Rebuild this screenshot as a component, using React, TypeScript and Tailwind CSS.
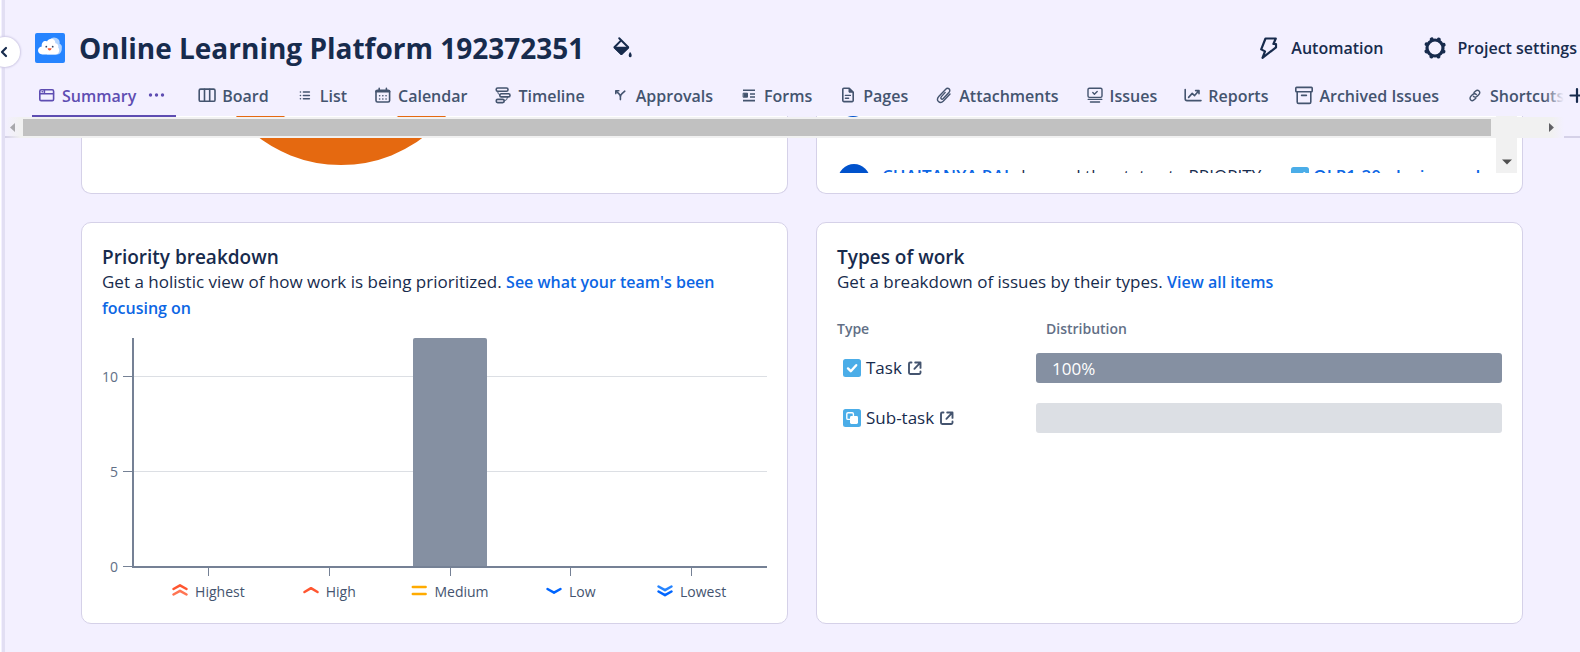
import React from "react";

type Tab = { name: string; icon: React.ReactNode; active?: boolean };

function Glyph({ children }: { children: React.ReactNode }) {
  return (
    <svg
      viewBox="0 0 20 20"
      className="size-5 shrink-0"
      fill="none"
      stroke="currentColor"
      strokeWidth="1.6"
      strokeLinecap="round"
      strokeLinejoin="round"
      aria-hidden="true"
    >
      {children}
    </svg>
  );
}

const tabs: Tab[] = [
  {
    name: "Summary",
    active: true,
    icon: (
      <Glyph>
        <rect x="2.8" y="3.8" width="13.8" height="10.8" rx="1.4" />
        <path d="M3 7.8h13.4M7.4 4v2.4M5.2 5.8h.2" />
      </Glyph>
    ),
  },
  {
    name: "Board",
    icon: (
      <Glyph>
        <rect x="2.2" y="3.1" width="15.8" height="12.2" rx="1.4" />
        <path d="M7.5 3.2v12M12.7 3.2v12" />
      </Glyph>
    ),
  },
  {
    name: "List",
    icon: (
      <Glyph>
        <path d="M8.4 6h6M8.4 9.4h6M8.4 12.8h6M5.4 6h.1M5.4 9.4h.1M5.4 12.8h.1" strokeWidth="1.5" />
      </Glyph>
    ),
  },
  {
    name: "Calendar",
    icon: (
      <Glyph>
        <rect x="3" y="4.2" width="13.6" height="11.8" rx="1.5" />
        <path d="M3.4 5.4h12.8" strokeWidth="2.4" />
        <path d="M6.2 2.4v2M13.4 2.4v2" />
        <path d="M6.6 9.8h.1M9.8 9.8h.1M13 9.8h.1M6.6 13h.1M9.8 13h.1M13 13h.1" />
      </Glyph>
    ),
  },
  {
    name: "Timeline",
    icon: (
      <Glyph>
        <rect x="3.2" y="2" width="11.8" height="3.2" rx="1.5" />
        <rect x="6.8" y="7.7" width="10.2" height="3.2" rx="1.5" />
        <rect x="3.2" y="13.4" width="8" height="3.2" rx="1.5" />
        <path d="M4.6 5.4q0 3 2.2 3.6M14.6 11.2q0 3.2-3.4 3.8" strokeWidth="1" />
      </Glyph>
    ),
  },
  {
    name: "Approvals",
    icon: (
      <Glyph>
        <path d="M9.4 13.6V11Q9.4 9 7.8 7.6L5.6 5.6M9.4 11q0-2 1.6-3.4l2.8-2.4" />
        <path d="M4.8 7.6V4.8h3" />
      </Glyph>
    ),
  },
  {
    name: "Forms",
    icon: (
      <Glyph>
        <path d="M4 4.2h12M11 8h5M11 11h5M4 14.6h12" strokeLinecap="butt" />
        <rect x="4.5" y="7.2" width="4" height="4" fill="currentColor" strokeWidth="1" />
      </Glyph>
    ),
  },
  {
    name: "Pages",
    icon: (
      <Glyph>
        <path d="M5.8 2.2h5.4l4 4v8.4q0 1-1 1H5.8q-1 0-1-1V3.2q0-1 1-1Z" />
        <path d="M11 2.4v3.8h4Z" fill="currentColor" strokeWidth="1" />
        <path d="M7.4 9.4h5M7.4 12.2h3.2" strokeWidth="1.4" />
      </Glyph>
    ),
  },
  {
    name: "Attachments",
    icon: (
      <Glyph>
        <path
          d="M11.2 6.4 7.4 10.6c-1.6 1.8.4 3.4 1.9 1.9l5.6-6c2.6-2.9-.9-5.7-3.4-3.1L5 10.2c-3.9 4.3 1 8.2 4.4 4.8l6.6-7"
          strokeWidth="1.4"
        />
      </Glyph>
    ),
  },
  {
    name: "Issues",
    icon: (
      <Glyph>
        <rect x="3" y="2.2" width="14" height="9.2" rx="1.4" strokeWidth="1.4" />
        <path d="m7.8 6.6 1.6 1.6 2.8-2.8" strokeWidth="1.4" />
        <path d="M3.2 13.4h13.6M5.4 16h9.2" strokeWidth="1.3" />
      </Glyph>
    ),
  },
  {
    name: "Reports",
    icon: (
      <Glyph>
        <path d="M2.2 3.6v9.2q0 1.8 1.8 1.8h14" />
        <path d="m5.6 11.4 3.6-4 2.4 2.2 4-4.6M12.6 4.6h3.4v3.2" />
      </Glyph>
    ),
  },
  {
    name: "Archived Issues",
    icon: (
      <Glyph>
        <rect x="1.8" y="1.4" width="16.4" height="4.4" rx=".8" />
        <path d="M3.2 6v10q0 1.4 1.4 1.4h10.8q1.4 0 1.4-1.4V6M7.6 9.4h4.8" />
      </Glyph>
    ),
  },
  {
    name: "Shortcuts",
    icon: (
      <Glyph>
        <path
          d="m9 6.6 1.4-1.4c2.6-2.6 6 .7 3.5 3.3l-1.7 1.7c-1.4 1.4-3 1-3.8 0M10.8 12.2l-1.4 1.4c-2.6 2.6-6-.7-3.5-3.3l1.7-1.7c1.4-1.4 3-1 3.8 0"
          strokeWidth="1.4"
        />
      </Glyph>
    ),
  },
];

function ProjectLogo() {
  return (
    <svg viewBox="0 0 30 30" className="size-[30px] shrink-0" role="img" aria-label="Project avatar">
      <rect width="30" height="30" rx="2" fill="#2684ff" />
      <path d="M15 6.6a5.4 5.4 0 0 1 9.6 4.2 4 4 0 0 1 2.2 4.4c0 4-2 6.4-5.8 6.4H12Z" fill="#b3d4ff" />
      <path
        d="M7.4 21.4C1.8 21.2 1.6 14 6.8 13.4 6 9 9.8 7 12 8.4c2-3.8 8.4-3.4 8.4 1.8 3 .4 3.2 3 2.8 4.2 2 2 1 7-2.8 7Z"
        fill="#fff"
      />
      <circle cx="11.3" cy="13.7" r=".9" fill="#344563" />
      <circle cx="17.7" cy="13.7" r=".9" fill="#344563" />
      <path d="M12.6 15.2h4q-.4 2.4-2 2.4t-2-2.4Z" fill="#ff5630" />
    </svg>
  );
}

function Header() {
  return (
    <header className="relative z-20 bg-[#f3f0ff] pl-[30px]">
      <div className="flex h-[76px] items-center pt-5">
        <ProjectLogo />
        <h1 className="ml-[14px] text-[28px] leading-10 font-bold whitespace-nowrap text-[#172b4d]">
          Online Learning Platform 192372351
        </h1>
        <button type="button" aria-label="Change background" className="ml-7 text-[#172b4d]">
          <svg viewBox="0 0 24 24" className="size-6" fill="none" stroke="currentColor" strokeWidth="2" strokeLinejoin="round" strokeLinecap="round">
            <path d="m7.2 2.2 9 9-6.8 6.8-7-6.8 6.8-6.8" />
            <path d="M3 11.8h13l-6.600 6.200Z" fill="currentColor" />
            <path d="M18.2 17c-2.600 4.600 2.600 4.600 0 0Z" fill="currentColor" strokeWidth="1.5" />
          </svg>
        </button>
        <div className="ml-auto flex items-center gap-10 pr-[3px] text-[16px] font-semibold text-[#172b4d]">
          <button type="button" className="flex items-center gap-[10px] whitespace-nowrap">
            <svg viewBox="0 0 24 24" className="size-6" fill="none" stroke="currentColor" strokeWidth="2.2" strokeLinejoin="round" strokeLinecap="round" aria-hidden="true">
              <path d="M8.5 2.5H18.8L16.4 8H19V11.4L5.5 21.8 8 15.4 4.2 13.4Z" />
            </svg>
            Automation
          </button>
          <button type="button" className="flex items-center gap-[10px] whitespace-nowrap">
            <svg viewBox="0 0 24 24" className="size-6" fill="none" stroke="currentColor" aria-hidden="true">
              <circle cx="12" cy="12" r="8" strokeWidth="3.2" />
              <circle cx="12" cy="12" r="9.2" strokeWidth="4" strokeLinecap="round" strokeDasharray="0.01 7.216" strokeDashoffset="3.61" />
            </svg>
            Project settings
          </button>
        </div>
      </div>
      <div className="flex h-10 items-center">
        <nav aria-label="Project views" className="relative -ml-[3px] flex h-full min-w-0 flex-1">
          <div className="flex h-10 min-w-0 flex-1 overflow-x-clip">
            {tabs.map((t) => (
              <div
                key={t.name}
                className={
                  t.active
                    ? "relative mr-4 flex shrink-0 items-center pr-[10px] pl-[5px] text-[#5e4db2]"
                    : "mr-4 flex shrink-0 items-center px-[5px] text-[#44546f]"
                }
              >
                <a href="#" className="flex items-center gap-[5px] text-[16px] font-semibold whitespace-nowrap">
                  {t.icon}
                  {t.name}
                </a>
                {t.active && (
                  <>
                    <button type="button" aria-label="More actions" className="ml-[10px]">
                      <svg viewBox="0 0 20 20" className="size-5" fill="currentColor">
                        <circle cx="4.5" cy="9" r="1.7" />
                        <circle cx="10.5" cy="9" r="1.7" />
                        <circle cx="16.5" cy="9" r="1.7" />
                      </svg>
                    </button>
                    <span className="absolute inset-x-0 -bottom-px h-[2px] bg-[#5e4db2]" />
                  </>
                )}
              </div>
            ))}
          </div>
          <span className="absolute inset-y-0 right-0 w-5 bg-linear-to-r from-[#f3f0ff00] to-[#f3f0ff]" />
        </nav>
        <button type="button" aria-label="Add view" className="-mr-2 ml-1 shrink-0 text-[#172b4d]">
          <svg viewBox="0 0 20 20" className="size-5" fill="none" stroke="currentColor" strokeWidth="2.2" strokeLinecap="round">
            <path d="M9 3v13M2.5 9.5h13" />
          </svg>
        </button>
      </div>
    </header>
  );
}

function HorizontalScrollbar() {
  return (
    <div className="absolute inset-x-0 top-px z-10 flex h-[21px]">
      <span className="absolute inset-x-0 bottom-0 h-[2px] bg-[#d5d1e8]" />
      <div className="relative mr-4 flex flex-1 items-center bg-linear-to-r from-[#f1f1f100] from-0% via-[#f1f1f1] via-1% to-[#f1f1f1] to-100%">
        <svg viewBox="0 0 18 21" className="h-[21px] w-[18px]" aria-hidden="true">
          <path d="M10 6v9l-5-4.500Z" fill="#a8a8ac" />
        </svg>
        <span className="h-[17px] flex-1 bg-[#c1c1c1]" />
        <svg viewBox="0 0 73 21" className="h-[21px] w-[73px]" aria-hidden="true">
          <path d="M58 6v9l5-4.500Z" fill="#606064" />
        </svg>
        <span className="absolute inset-y-0 right-0 w-3 bg-linear-to-r from-[#f3f0ff00] to-[#f3f0ff]" />
      </div>
    </div>
  );
}

function StatusCard() {
  return (
    <section className="h-[78px] overflow-hidden rounded-b-[10px] border border-t-0 border-[#d5d1e8] bg-white pl-[122px]">
      <svg viewBox="0 0 274 50" className="h-[50px] w-[274px]" role="img" aria-label="Status overview">
        <circle cx="137" cy="-88" r="121" fill="none" stroke="#e56910" strokeWidth="32" />
      </svg>
    </section>
  );
}

function ActivityCard() {
  return (
    <section className="h-[78px] rounded-b-[10px] border border-t-0 border-[#d5d1e8] bg-white pr-[5px] pl-[21px]">
      <div className="flex h-[57px] justify-between overflow-hidden">
        <div className="relative flex min-w-0 flex-1 items-start gap-3 pt-12">
          <span className="absolute -top-[29px] left-0 size-[30px] rounded-full bg-[#0052cc]" />
          <span className="size-8 shrink-0 rounded-full bg-[#0052cc]" />
          <p className="flex items-center text-[17px] leading-6 whitespace-nowrap text-[#172b4d]">
            <a href="#" className="font-semibold text-[#0c66e4]">CHAITANYA RAJ</a>
            <span className="ml-1">changed the status to</span>
            <span className="ml-1">PRIORITY</span>
            <svg viewBox="0 0 18 18" className="ml-[30px] size-[18px]" aria-hidden="true">
              <rect width="18" height="18" rx="2.5" fill="#4bade8" />
              <path d="m5 9.4 2.8 2.8 5.4-6" fill="none" stroke="#fff" strokeWidth="2.4" strokeLinecap="round" strokeLinejoin="round" />
            </svg>
            <a href="#" className="ml-1 font-semibold text-[#0c66e4]">OLP1-20 playing and</a>
          </p>
        </div>
        <div className="flex w-[21px] items-end justify-center bg-[#f1f1f1] pb-2">
          <svg viewBox="0 0 10 6" className="h-[6px] w-[10px]" aria-hidden="true">
            <path d="M0 .5h10L5 5.500Z" fill="#505050" />
          </svg>
        </div>
      </div>
    </section>
  );
}

const cardClass = "rounded-[10px] border border-[#d5d1e8] bg-white px-5 pt-[22px] text-[#172b4d]";

const priorities: { name: string; color: string[]; paths: string[] }[] = [
  { name: "Highest", color: ["#ff5630", "#ff7452"], paths: ["M1.5 6 8 2.3 14.5 6", "M1.5 11.5 8 7.8l6.5 3.7"] },
  { name: "High", color: ["#ff5630"], paths: ["M1.5 9 8 5.2l6.5 3.8"] },
  { name: "Medium", color: ["#ffab00", "#ffab00"], paths: ["M1.8 4h12.8", "M1.8 11h12.8"] },
  { name: "Low", color: ["#0065ff"], paths: ["M1.5 6 8 9.7 14.5 6"] },
  { name: "Lowest", color: ["#2684ff", "#0065ff"], paths: ["M1.5 3.5 8 7.2 14.5 3.5", "M1.5 8.5 8 12.2l6.5-3.7"] },
];

function PriorityCard() {
  return (
    <section className={cardClass}>
      <h2 className="text-[19px] leading-6 font-semibold">Priority breakdown</h2>
      <p className="text-[17px] leading-[25px]">
        Get a holistic view of how work is being prioritized.{" "}
        <a href="#" className="text-[16px] font-semibold text-[#0c66e4]">See what your team's been focusing on</a>
      </p>
      <svg viewBox="0 0 665 238" className="mt-[17px] block w-full" role="img" aria-label="Issues by priority">
        <path d="M31 38.5H665M31 133.5H665" stroke="#dcdfe4" fill="none" />
        <path d="M311 228V2q0-2 2-2h70q2 0 2 2v226Z" fill="#8590a2" />
        <path d="M31 0V229M30 229H665" stroke="#758195" strokeWidth="2" fill="none" />
        <path
          d="M21 38.5h9M21 133.5h9M21 228.5h9M106.5 230v8M227.5 230v8M348.5 230v8M468.5 230v8M589.5 230v8"
          stroke="#758195"
          fill="none"
        />
        <g fill="#626f86" fontSize="14" textAnchor="end">
          <text x="16" y="44">10</text>
          <text x="16" y="139">5</text>
          <text x="16" y="234">0</text>
        </g>
      </svg>
      <ul className="mt-[5px] mb-[22px] ml-[31px] grid grid-cols-5 px-[15px]">
        {priorities.map((p) => (
          <li key={p.name} className="flex h-5 items-center justify-center gap-[7px] text-[14px] text-[#44546f]">
            <svg viewBox="0 0 16 16" className="size-4 shrink-0" fill="none" strokeWidth="2.5" strokeLinecap="round" strokeLinejoin="round" aria-hidden="true">
              {p.paths.map((d, i) => (
                <path key={d} d={d} stroke={p.color[i]} />
              ))}
            </svg>
            {p.name}
          </li>
        ))}
      </ul>
    </section>
  );
}

function OpenIcon() {
  return (
    <svg viewBox="0 0 16 16" className="size-4" fill="none" stroke="#44546f" strokeWidth="1.9" strokeLinecap="round" strokeLinejoin="round" aria-hidden="true">
      <path d="M4.5 2.5H3.2Q2 2.500 2 3.700v9.100Q2 14 3.200 14h9.100q1.200 0 1.200-1.200v-1.300M8.200 2.500H13.500v5.400M13.100 2.900 7.400 8.800" />
    </svg>
  );
}

function TypesCard() {
  return (
    <section className={cardClass}>
      <h2 className="text-[19px] leading-6 font-semibold">Types of work</h2>
      <p className="text-[17px] leading-[25px]">
        Get a breakdown of issues by their types.{" "}
        <a href="#" className="text-[16px] font-semibold text-[#0c66e4]">View all items</a>
      </p>
      <table className="mt-[19px] w-full table-fixed border-collapse text-left">
        <thead>
          <tr className="h-[29px] text-[14px] text-[#626f86]">
            <th scope="col" className="w-[199px] p-0 font-semibold">Type</th>
            <th scope="col" className="p-0 pl-[10px] font-semibold">Distribution</th>
          </tr>
        </thead>
        <tbody className="text-[17px]">
          <tr className="h-[50px]">
            <td className="p-0">
              <a href="#" className="flex items-center gap-[5px] pl-[6px]">
                <svg viewBox="0 0 18 18" className="size-[18px]" aria-hidden="true">
                  <rect width="18" height="18" rx="2.5" fill="#4bade8" />
                  <path d="m5 9.4 2.8 2.8 5.4-6" fill="none" stroke="#fff" strokeWidth="2.4" strokeLinecap="round" strokeLinejoin="round" />
                </svg>
                Task
                <OpenIcon />
              </a>
            </td>
            <td className="p-0">
              <div className="h-[30px] rounded-[3px] bg-[#8590a2] pl-4 leading-[32px] text-white">100%</div>
            </td>
          </tr>
          <tr className="h-[50px]">
            <td className="p-0">
              <a href="#" className="flex items-center gap-[5px] pl-[6px]">
                <svg viewBox="0 0 18 18" className="size-[18px]" aria-hidden="true">
                  <rect width="18" height="18" rx="2.5" fill="#4bade8" />
                  <rect x="3.8" y="3.8" width="6.6" height="6.6" rx="1.2" fill="none" stroke="#fff" strokeWidth="1.4" />
                  <rect x="7" y="7" width="8" height="8" rx="1.4" fill="#fff" />
                </svg>
                Sub-task
                <OpenIcon />
              </a>
            </td>
            <td className="p-0">
              <div className="h-[30px] rounded-[3px] bg-[#dcdfe4]" />
            </td>
          </tr>
        </tbody>
      </table>
    </section>
  );
}

export default function App() {
  return (
    <div className="flex min-h-screen overflow-hidden bg-[#f3f0ff] font-['Open_Sans','Noto_Sans',sans-serif]">
      <aside className="relative z-30 w-[5px] shrink-0 border-r-[3px] border-l border-r-[#e2dff3] border-l-white">
        <button
          type="button"
          aria-label="Expand sidebar"
          className="absolute top-[37px] -left-[11px] flex size-[30px] items-center justify-center rounded-full bg-white text-[#172b4d] shadow-[0_0_2px_1px_#cfcae6]"
        >
          <svg viewBox="0 0 16 16" className="size-4" fill="none" stroke="currentColor" strokeWidth="2.2" strokeLinecap="round" strokeLinejoin="round">
            <path d="M9 4 5 8l4 4" />
          </svg>
        </button>
      </aside>
      <div className="min-w-0 flex-1">
        <Header />
        <main className="relative">
          <HorizontalScrollbar />
          <div className="grid grid-cols-2 gap-7 pr-[57px] pl-[76px]">
            <StatusCard />
            <ActivityCard />
            <PriorityCard />
            <TypesCard />
          </div>
        </main>
      </div>
    </div>
  );
}
